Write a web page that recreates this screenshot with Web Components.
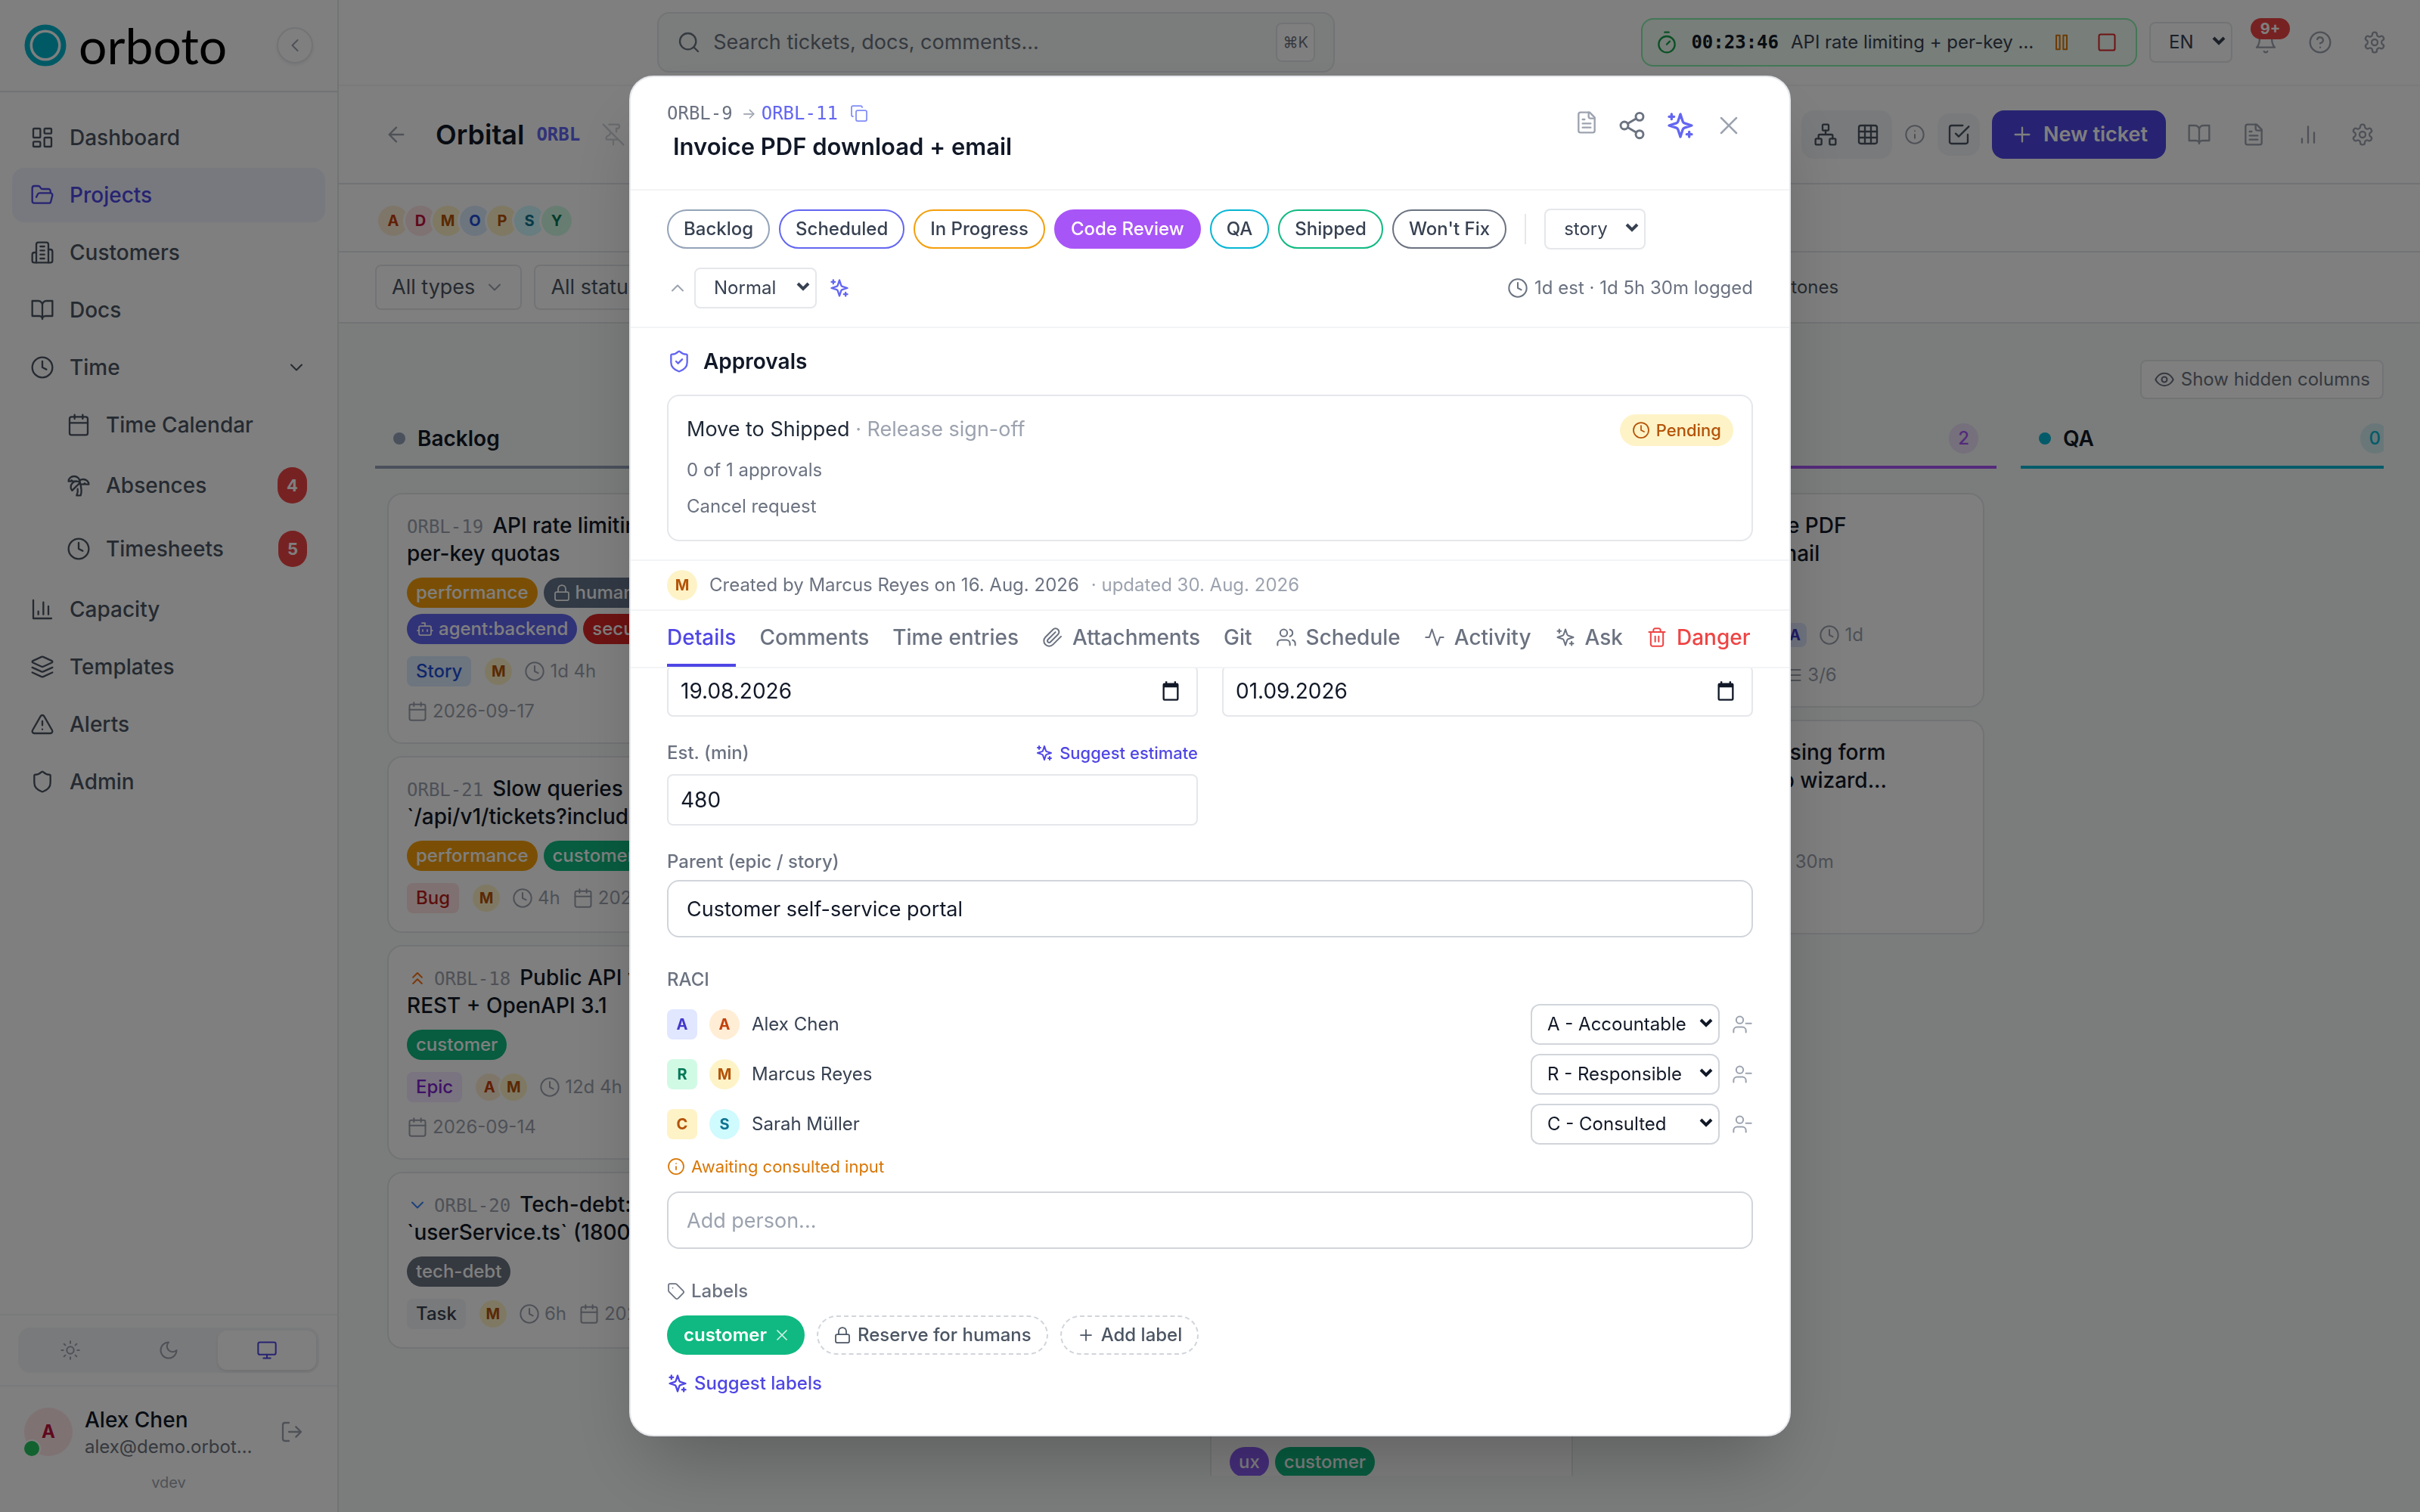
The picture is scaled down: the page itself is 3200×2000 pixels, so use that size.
<!DOCTYPE html>
<html lang="en">
<head>
<meta charset="utf-8">
<title>Orbital - orboto</title>
<style>
    html, body { margin: 0; height: 100%; }
    body {
        font-family: Inter, "Liberation Sans", sans-serif;
        font-size: 28px;
        line-height: 40px;
        color: #111827;
        background: #f6faf8;
        overflow: hidden;
    }
</style>
</head>
<body>
<orboto-app></orboto-app>

<script>
const ICONS = {
    dashboard: '<rect x="3" y="3" width="7" height="9" rx="1"/><rect x="14" y="3" width="7" height="5" rx="1"/><rect x="14" y="12" width="7" height="9" rx="1"/><rect x="3" y="16" width="7" height="5" rx="1"/>',
    folder: '<path d="m6 14 1.5-2.9A2 2 0 0 1 9.24 10H20a2 2 0 0 1 1.94 2.5l-1.54 6a2 2 0 0 1-1.95 1.5H4a2 2 0 0 1-2-2V5a2 2 0 0 1 2-2h3.9a2 2 0 0 1 1.69.9l.81 1.2a2 2 0 0 0 1.67.9H18a2 2 0 0 1 2 2v2"/>',
    building: '<path d="M6 22V4a2 2 0 0 1 2-2h8a2 2 0 0 1 2 2v18Z"/><path d="M6 12H4a2 2 0 0 0-2 2v6a2 2 0 0 0 2 2h2M18 9h2a2 2 0 0 1 2 2v9a2 2 0 0 1-2 2h-2M10 6h4M10 10h4M10 14h4M10 18h4"/>',
    book: '<path d="M2 3h6a4 4 0 0 1 4 4v14a3 3 0 0 0-3-3H2zM22 3h-6a4 4 0 0 0-4 4v14a3 3 0 0 1 3-3h7z"/>',
    clock: '<circle cx="12" cy="12" r="10"/><path d="M12 6v6l4 2"/>',
    'chevron-down': '<path d="m6 9 6 6 6-6"/>',
    'chevron-left': '<path d="m15 18-6-6 6-6"/>',
    'chevron-up': '<path d="m18 15-6-6-6 6"/>',
    'chevrons-up': '<path d="m17 11-5-5-5 5M17 18l-5-5-5 5"/>',
    calendar: '<rect x="3" y="4" width="18" height="18" rx="2"/><path d="M16 2v4M8 2v4M3 10h18"/>',
    palm: '<path d="M13 8c0-2.76-2.46-5-5.5-5S2 5.24 2 8h2l1-1 1 1h4"/><path d="M13 7.14A5.82 5.82 0 0 1 16.5 6c3.04 0 5.5 2.24 5.5 5h-3l-1-1-1 1h-3"/><path d="M5.89 9.71c-2.15 2.15-2.3 5.47-.35 7.43l4.24-4.25.7-.7.71-.71 2.12-2.12c-1.95-1.96-5.27-1.8-7.42.35"/><path d="M11 15.5c.5 2.5-.17 4.5-1 6.5h4c2-5.5-.5-12-1-14"/>',
    capacity: '<path d="M3 3v18h18M18 17V9M13 17V5M8 17v-3"/>',
    layers: '<path d="m12.83 2.18a2 2 0 0 0-1.66 0L2.6 6.08a1 1 0 0 0 0 1.83l8.58 3.91a2 2 0 0 0 1.66 0l8.58-3.9a1 1 0 0 0 0-1.83Z"/><path d="m22 17.65-9.17 4.16a2 2 0 0 1-1.66 0L2 17.65M22 12.65l-9.17 4.16a2 2 0 0 1-1.66 0L2 12.65"/>',
    alert: '<path d="m21.73 18-8-14a2 2 0 0 0-3.48 0l-8 14A2 2 0 0 0 4 21h16a2 2 0 0 0 1.73-3ZM12 9v4M12 17h.01"/>',
    shield: '<path d="M20 13c0 5-3.5 7.5-7.66 8.95a1 1 0 0 1-.67-.01C7.5 20.5 4 18 4 13V6a1 1 0 0 1 1-1c2 0 4.5-1.2 6.24-2.72a1.17 1.17 0 0 1 1.52 0C14.51 3.81 17 5 19 5a1 1 0 0 1 1 1z"/>',
    'shield-check': '<path d="M20 13c0 5-3.5 7.5-7.66 8.95a1 1 0 0 1-.67-.01C7.5 20.5 4 18 4 13V6a1 1 0 0 1 1-1c2 0 4.5-1.2 6.24-2.72a1.17 1.17 0 0 1 1.52 0C14.51 3.81 17 5 19 5a1 1 0 0 1 1 1zM9 12l2 2 4-4"/>',
    sun: '<circle cx="12" cy="12" r="4"/><path d="M12 2v2M12 20v2M4.93 4.93l1.41 1.41M17.66 17.66l1.41 1.41M2 12h2M20 12h2M6.34 17.66l-1.41 1.41M19.07 4.93l-1.41 1.41"/>',
    moon: '<path d="M12 3a6 6 0 0 0 9 9 9 9 0 1 1-9-9Z"/>',
    monitor: '<rect x="2" y="3" width="20" height="14" rx="2"/><path d="M8 21h8M12 17v4"/>',
    logout: '<path d="M9 21H5a2 2 0 0 1-2-2V5a2 2 0 0 1 2-2h4M16 17l5-5-5-5M21 12H9"/>',
    search: '<circle cx="11" cy="11" r="8"/><path d="m21 21-4.3-4.3"/>',
    timer: '<path d="M10 2h4M12 14l3-3"/><circle cx="12" cy="14" r="8"/>',
    pause: '<rect x="6" y="4" width="4" height="16"/><rect x="14" y="4" width="4" height="16"/>',
    stop: '<rect x="3" y="3" width="18" height="18" rx="2"/>',
    bell: '<path d="M6 8a6 6 0 0 1 12 0c0 7 3 9 3 9H3s3-2 3-9M10.3 21a1.94 1.94 0 0 0 3.4 0"/>',
    help: '<circle cx="12" cy="12" r="10"/><path d="M9.09 9a3 3 0 0 1 5.83 1c0 2-3 3-3 3M12 17h.01"/>',
    gear: '<path d="M12.22 2h-.44a2 2 0 0 0-2 2v.18a2 2 0 0 1-1 1.73l-.43.25a2 2 0 0 1-2 0l-.15-.08a2 2 0 0 0-2.73.73l-.22.38a2 2 0 0 0 .73 2.73l.15.1a2 2 0 0 1 1 1.72v.51a2 2 0 0 1-1 1.74l-.15.09a2 2 0 0 0-.73 2.73l.22.38a2 2 0 0 0 2.73.73l.15-.08a2 2 0 0 1 2 0l.43.25a2 2 0 0 1 1 1.73V20a2 2 0 0 0 2 2h.44a2 2 0 0 0 2-2v-.18a2 2 0 0 1 1-1.73l.43-.25a2 2 0 0 1 2 0l.15.08a2 2 0 0 0 2.73-.73l.22-.39a2 2 0 0 0-.73-2.73l-.15-.08a2 2 0 0 1-1-1.74v-.5a2 2 0 0 1 1-1.74l.15-.09a2 2 0 0 0 .73-2.73l-.22-.38a2 2 0 0 0-2.73-.73l-.15.08a2 2 0 0 1-2 0l-.43-.25a2 2 0 0 1-1-1.73V4a2 2 0 0 0-2-2z"/><circle cx="12" cy="12" r="3"/>',
    'arrow-left': '<path d="m12 19-7-7 7-7M19 12H5"/>',
    'pin-off': '<path d="M2 2l20 20M12 17v5M9 9v1.76a2 2 0 0 1-1.11 1.79l-1.78.9A2 2 0 0 0 5 15.24V16a1 1 0 0 0 1 1h11M15 9.34V6h1a2 2 0 0 0 0-4H7.89"/>',
    network: '<rect x="16" y="16" width="6" height="6" rx="1"/><rect x="2" y="16" width="6" height="6" rx="1"/><rect x="9" y="2" width="6" height="6" rx="1"/><path d="M5 16v-3a1 1 0 0 1 1-1h12a1 1 0 0 1 1 1v3M12 12V8"/>',
    grid: '<rect x="3" y="3" width="18" height="18" rx="2"/><path d="M3 9h18M3 15h18M9 3v18M15 3v18"/>',
    info: '<circle cx="12" cy="12" r="10"/><path d="M12 16v-4M12 8h.01"/>',
    'check-square': '<path d="m9 11 3 3L22 4"/><path d="M21 12v7a2 2 0 0 1-2 2H5a2 2 0 0 1-2-2V5a2 2 0 0 1 2-2h11"/>',
    plus: '<path d="M5 12h14M12 5v14"/>',
    file: '<path d="M15 2H6a2 2 0 0 0-2 2v16a2 2 0 0 0 2 2h12a2 2 0 0 0 2-2V7Z"/><path d="M14 2v4a2 2 0 0 0 2 2h4M10 9H8M16 13H8M16 17H8"/>',
    bars: '<path d="M18 20V10M12 20V4M6 20v-4"/>',
    eye: '<path d="M2 12s3-7 10-7 10 7 10 7-3 7-10 7-10-7-10-7Z"/><circle cx="12" cy="12" r="3"/>',
    lock: '<rect x="3" y="11" width="18" height="11" rx="2"/><path d="M7 11V7a5 5 0 0 1 10 0v4"/>',
    bot: '<path d="M12 8V4H8"/><rect x="4" y="8" width="16" height="12" rx="2"/><path d="M2 14h2M20 14h2M15 13v2M9 13v2"/>',
    list: '<path d="M3 6h18M3 12h18M3 18h18"/>',
    copy: '<rect x="8" y="8" width="14" height="14" rx="2"/><path d="M4 16c-1.1 0-2-.9-2-2V4c0-1.1.9-2 2-2h10c1.1 0 2 .9 2 2"/>',
    share: '<circle cx="18" cy="5" r="3"/><circle cx="6" cy="12" r="3"/><circle cx="18" cy="19" r="3"/><path d="m8.59 13.51 6.83 3.98M15.41 6.51l-6.82 3.98"/>',
    sparkles: '<path d="m12 3-1.912 5.813a2 2 0 0 1-1.275 1.275L3 12l5.813 1.912a2 2 0 0 1 1.275 1.275L12 21l1.912-5.813a2 2 0 0 1 1.275-1.275L21 12l-5.813-1.912a2 2 0 0 1-1.275-1.275L12 3ZM5 3v4M19 17v4M3 5h4M17 19h4"/>',
    x: '<path d="M18 6 6 18M6 6l12 12"/>',
    clip: '<path d="m21.44 11.05-9.19 9.19a6 6 0 0 1-8.49-8.49l8.57-8.57A4 4 0 1 1 18 8.84l-8.59 8.57a2 2 0 0 1-2.83-2.83l8.49-8.48"/>',
    users: '<path d="M16 21v-2a4 4 0 0 0-4-4H6a4 4 0 0 0-4 4v2"/><circle cx="9" cy="7" r="4"/><path d="M22 21v-2a4 4 0 0 0-3-3.87M16 3.13a4 4 0 0 1 0 7.75"/>',
    activity: '<path d="M22 12h-4l-3 9L9 3l-3 9H2"/>',
    trash: '<path d="M3 6h18M19 6v14c0 1-1 2-2 2H7c-1 0-2-1-2-2V6M8 6V4c0-1 1-2 2-2h4c1 0 2 1 2 2v2M10 11v6M14 11v6"/>',
    'user-minus': '<path d="M16 21v-2a4 4 0 0 0-4-4H6a4 4 0 0 0-4 4v2"/><circle cx="9" cy="7" r="4"/><path d="M22 11h-6"/>',
    tag: '<path d="M12.59 2.59A2 2 0 0 0 11.17 2H4a2 2 0 0 0-2 2v7.17a2 2 0 0 0 .59 1.42l8.7 8.7a2.43 2.43 0 0 0 3.42 0l6.58-6.58a2.43 2.43 0 0 0 0-3.42zM7.5 7.5h.01"/>',
    'date-picker': '<path fill="currentColor" stroke="none" fill-rule="evenodd" d="M6 1h2v2h8V1h2v2h1a2 2 0 0 1 2 2v16a2 2 0 0 1-2 2H5a2 2 0 0 1-2-2V5a2 2 0 0 1 2-2h1zM5 8v13h14V8z"/>',
};

const AVATAR_COLORS = {
    orange: ["#ffedd5", "#c2410c"],
    rose: ["#ffe4e6", "#be123c"],
    amber: ["#fef3c7", "#b45309"],
    blue: ["#dbeafe", "#1d4ed8"],
    cyan: ["#cffafe", "#0e7490"],
    green: ["#d1fae5", "#047857"],
    indigo: ["#e0e7ff", "#4338ca"],
};

// Reset shared by every shadow root
const BASE = `
    *, *::before, *::after { box-sizing: border-box; }
    button, input, select { font: inherit; color: inherit; margin: 0; }
    button { display: inline-flex; align-items: center; justify-content: center; border: 0; padding: 0; background: none; cursor: pointer; white-space: nowrap; }
    a { color: inherit; text-decoration: none; }
    h1, h2, h3, p { margin: 0; font: inherit; }
    .mono { font-family: "DejaVu Sans Mono", "Liberation Mono", monospace; font-size: 24px; }
`;

class BaseElement extends HTMLElement {
    constructor() {
        super();
        this.attachShadow({ mode: "open" });
    }

    connectedCallback() {
        this.shadowRoot.innerHTML = `<style>${BASE}${this.styles()}</style>${this.markup()}`;
    }

    attr(name, fallback = "") {
        return this.getAttribute(name) ?? fallback;
    }

    styles() { return ""; }
    markup() { return "<slot></slot>"; }
}

class UiIcon extends BaseElement {
    styles() {
        const size = this.attr("size", "32");
        return `
            :host { display: inline-flex; flex: none; width: ${size}px; height: ${size}px; }
            svg { width: 100%; height: 100%; }
        `;
    }
    markup() {
        return `<svg viewBox="0 0 24 24" fill="none" stroke="currentColor" stroke-width="${this.attr("stroke", "1.75")}" stroke-linecap="round" stroke-linejoin="round" aria-hidden="true">${ICONS[this.attr("name")]}</svg>`;
    }
}
customElements.define("ui-icon", UiIcon);

class UiAvatar extends BaseElement {
    styles() {
        const [bg, fg] = AVATAR_COLORS[this.attr("tone", "amber")];
        const size = this.attr("size", "40");
        return `
            :host {
                display: inline-flex; flex: none; align-items: center; justify-content: center;
                width: ${size}px; height: ${size}px; border-radius: ${this.hasAttribute("square") ? "8px" : "50%"};
                background: ${bg}; color: ${fg};
                font-size: ${size > 50 ? 24 : 20}px; font-weight: 700; line-height: 1;
            }
        `;
    }
}
customElements.define("ui-avatar", UiAvatar);

class UiSelect extends BaseElement {
    styles() {
        return `
            :host { display: inline-grid; flex: none; font-size: 24px; line-height: 32px; color: #374151; --edge: #e5e7eb; --pad: 24px; --radius: 8px; }
            select {
                grid-area: 1 / 1; width: 100%; height: 54px; appearance: none; background: #fff;
                border: 2px solid var(--edge); border-radius: var(--radius); padding: 0 36px 0 var(--pad);
            }
            svg { grid-area: 1 / 1; place-self: center end; width: 18px; height: 12px; margin: 0 9px 4px 0; pointer-events: none; }
        `;
    }
    markup() {
        const options = this.attr("options").split("|").map(o => `<option>${o}</option>`).join("");
        return `
            <select aria-label="${this.attr("label")}">${options}</select>
            <svg viewBox="0 0 18 12" fill="none" stroke="currentColor" stroke-width="4"><path d="m2 2 7 7 7-7"/></svg>
        `;
    }
}
customElements.define("ui-select", UiSelect);

class NavItem extends BaseElement {
    styles() {
        return `
            :host { display: block; }
            a { display: flex; align-items: center; gap: 20px; padding: 16px 24px; border-radius: 16px; color: #4b5563; font-weight: 500; }
            :host([sub]) a { padding-left: 72px; }
            :host([active]) a { background: #eef2ff; color: #4f46e5; }
            .label { flex: 1; }
            .badge { min-width: 38px; height: 48px; line-height: 48px; padding: 0 12px; border-radius: 20px; background: #ef4444; color: #fff; font-size: 22px; font-weight: 700; text-align: center; }
        `;
    }
    markup() {
        const badge = this.hasAttribute("badge") ? `<span class="badge">${this.attr("badge")}</span>` : "";
        const chevron = this.hasAttribute("expandable") ? `<ui-icon name="chevron-down" size="28"></ui-icon>` : "";
        return `<a href="#"><ui-icon name="${this.attr("icon")}"></ui-icon><span class="label"><slot></slot></span>${badge}${chevron}</a>`;
    }
}
customElements.define("nav-item", NavItem);

class AppSidebar extends BaseElement {
    styles() {
        return `
            :host { display: flex; flex-direction: column; flex: none; width: 448px; background: #fff; border-right: 2px solid #e5e7eb; }
            header { display: flex; align-items: center; height: 122px; padding: 0 32px; border-bottom: 2px solid #e5e7eb; }
            .logo { display: flex; align-items: center; gap: 16px; flex: 1; color: #000; font-family: Lato, Inter, sans-serif; font-weight: 400; font-size: 66px; line-height: 56px; }
            .logo svg { width: 56px; height: 56px; }
            .collapse { width: 48px; height: 48px; border: 2px solid #e5e7eb; border-radius: 50%; color: #9ca3af; box-shadow: 0 2px 4px rgba(0, 0, 0, .08); }
            nav { display: flex; flex-direction: column; gap: 4px; flex: 1; padding: 24px 16px; }
            .theme { padding: 16px 24px; border-top: 2px solid #f3f4f6; }
            .segments { display: grid; grid-template-columns: repeat(3, 1fr); padding: 4px; border-radius: 16px; background: #f3f4f6; color: #9ca3af; }
            .segments button { height: 52px; border-radius: 12px; }
            .segments .on { background: #fff; color: #4f46e5; box-shadow: 0 2px 4px rgba(0, 0, 0, .08); }
            footer { padding: 24px 32px; border-top: 2px solid #f3f4f6; }
            .user { display: flex; align-items: center; gap: 16px; }
            .face { position: relative; display: flex; }
            .dot { position: absolute; left: -2px; bottom: -2px; width: 24px; height: 24px; border: 2px solid #fff; border-radius: 50%; background: #22c55e; }
            .who { flex: 1; min-width: 0; white-space: nowrap; }
            .name { font-weight: 500; }
            .mail { font-size: 24px; line-height: 32px; color: #6b7280; }
            .exit { width: 56px; height: 56px; color: #9ca3af; }
            .version { margin-top: 16px; font-size: 20px; line-height: 30px; text-align: center; color: #9ca3af; }
        `;
    }
    markup() {
        return `
            <header>
                <a class="logo" href="#">
                    <svg viewBox="0 0 56 56"><circle cx="28" cy="28" r="24" fill="none" stroke="#00b4cc" stroke-width="7"/><circle cx="28" cy="28" r="17" fill="#00b4cc"/></svg>
                    orboto
                </a>
                <button class="collapse" aria-label="Collapse"><ui-icon name="chevron-left" size="28"></ui-icon></button>
            </header>
            <nav>
                <nav-item icon="dashboard">Dashboard</nav-item>
                <nav-item icon="folder" active>Projects</nav-item>
                <nav-item icon="building">Customers</nav-item>
                <nav-item icon="book">Docs</nav-item>
                <nav-item icon="clock" expandable>Time</nav-item>
                <nav-item icon="calendar" sub>Time Calendar</nav-item>
                <nav-item icon="palm" sub badge="4">Absences</nav-item>
                <nav-item icon="clock" sub badge="5">Timesheets</nav-item>
                <nav-item icon="capacity">Capacity</nav-item>
                <nav-item icon="layers">Templates</nav-item>
                <nav-item icon="alert">Alerts</nav-item>
                <nav-item icon="shield">Admin</nav-item>
            </nav>
            <div class="theme">
                <div class="segments">
                    <button aria-label="Light"><ui-icon name="sun" size="28"></ui-icon></button>
                    <button aria-label="Dark"><ui-icon name="moon" size="28"></ui-icon></button>
                    <button class="on" aria-label="System"><ui-icon name="monitor" size="28"></ui-icon></button>
                </div>
            </div>
            <footer>
                <div class="user">
                    <div class="face"><ui-avatar tone="rose" size="64">A</ui-avatar><span class="dot"></span></div>
                    <div class="who">
                        <div class="name">Alex Chen</div>
                        <div class="mail">alex@demo.orbot…</div>
                    </div>
                    <button class="exit" aria-label="Log out"><ui-icon name="logout"></ui-icon></button>
                </div>
                <div class="version">vdev</div>
            </footer>
        `;
    }
}
customElements.define("app-sidebar", AppSidebar);

class AppTopbar extends BaseElement {
    styles() {
        return `
            :host { display: flex; align-items: center; gap: 16px; flex: none; height: 114px; padding: 0 32px; background: #fff; border-bottom: 2px solid #f3f4f6; }
            .middle { flex: 1; display: flex; justify-content: center; }
            .search { display: flex; align-items: center; gap: 16px; width: 896px; height: 80px; padding: 0 24px; border: 2px solid #e5e7eb; border-radius: 16px; background: #f6faf8; color: #6b7280; font-size: 27px; }
            .search span { flex: 1; text-align: left; }
            kbd { height: 52px; width: 52px; line-height: 48px; border: 2px solid #e5e7eb; border-radius: 8px; background: #fff; font-family: Inter, sans-serif; font-size: 20px; text-align: center; }
            .timer { display: flex; align-items: center; height: 64px; padding: 0 16px; gap: 16px; border: 2px solid #86efac; border-radius: 16px; background: #f0fdf4; color: #16a34a; }
            .timer .mono { font-weight: 700; color: #111827; }
            .task { width: 320px; white-space: nowrap; font-size: 24px; color: #374151; }
            .timer button { width: 44px; height: 44px; }
            .pause { color: #d97706; }
            .stop { color: #dc2626; }
            .tool { position: relative; width: 56px; height: 56px; color: #9ca3af; }
            .count { position: absolute; top: -4px; right: -4px; width: 52px; height: 28px; line-height: 28px; border-radius: 14px; background: #ef4444; color: #fff; font-size: 20px; font-weight: 700; }
            ui-select { width: 110px; }
        `;
    }
    markup() {
        return `
            <div class="middle">
                <button class="search"><ui-icon name="search"></ui-icon><span>Search tickets, docs, comments...</span><kbd>⌘K</kbd></button>
            </div>
            <div class="timer">
                <ui-icon name="timer"></ui-icon>
                <span class="mono">00:23:46</span>
                <span class="task">API rate limiting + per-key …</span>
                <button class="pause" aria-label="Pause"><ui-icon name="pause" size="28"></ui-icon></button>
                <button class="stop" aria-label="Stop"><ui-icon name="stop" size="28"></ui-icon></button>
            </div>
            <ui-select label="Language" options="EN|DE"></ui-select>
            <button class="tool" aria-label="Notifications"><ui-icon name="bell"></ui-icon><span class="count">9+</span></button>
            <button class="tool" aria-label="Help"><ui-icon name="help"></ui-icon></button>
            <button class="tool" aria-label="Settings"><ui-icon name="gear"></ui-icon></button>
        `;
    }
}
customElements.define("app-topbar", AppTopbar);

class ProjectHeader extends BaseElement {
    styles() {
        return `
            :host { display: block; flex: none; background: #fff; }
            .bar { display: flex; align-items: center; gap: 16px; height: 130px; padding: 0 48px; border-bottom: 2px solid #e5e7eb; }
            .tool { width: 56px; height: 56px; color: #9ca3af; }
            h1 { margin-left: 8px; font-size: 36px; font-weight: 600; }
            .key { font-weight: 700; color: #6366f1; }
            .pin { color: #d1d5db; }
            .spacer { flex: 1; }
            .views { display: flex; padding: 4px; border-radius: 16px; background: #f3f4f6; color: #4b5563; }
            .views button { width: 56px; height: 56px; }
            .info { color: #9ca3af; }
            .check { width: 56px; height: 56px; border-radius: 16px; background: #f3f4f6; color: #4b5563; }
            .new { height: 64px; padding: 0 24px; gap: 12px; border-radius: 16px; background: #4f46e5; color: #fff; font-size: 27px; font-weight: 600; }
            .members { display: flex; height: 90px; padding: 28px 52px 0; border-bottom: 2px solid #e5e7eb; }
            .members ui-avatar { box-shadow: 0 0 0 3px #fff; }
            .members ui-avatar + ui-avatar { margin-left: -4px; }
            .filters { display: flex; align-items: center; gap: 16px; height: 94px; padding: 0 48px; border-bottom: 2px solid #e5e7eb; color: #4b5563; }
            .filters button { height: 60px; gap: 12px; padding: 0 20px; border: 2px solid #e5e7eb; border-radius: 8px; font-size: 27px; }
            .filters button ui-icon { color: #9ca3af; }
            .filters input[type=search] { width: 1230px; height: 60px; border: 2px solid #e5e7eb; border-radius: 8px; }
            .filters label { display: flex; align-items: center; gap: 12px; font-size: 24px; }
            .filters label input { width: 28px; height: 28px; }
        `;
    }
    markup() {
        return `
            <div class="bar">
                <button class="tool" aria-label="Back"><ui-icon name="arrow-left"></ui-icon></button>
                <h1>Orbital</h1>
                <span class="key mono">ORBL</span>
                <button class="tool pin" aria-label="Pin"><ui-icon name="pin-off"></ui-icon></button>
                <span class="spacer"></span>
                <div class="views">
                    <button aria-label="Tree"><ui-icon name="network"></ui-icon></button>
                    <button aria-label="Table"><ui-icon name="grid"></ui-icon></button>
                </div>
                <button class="info" aria-label="Info"><ui-icon name="info" size="28"></ui-icon></button>
                <button class="check" aria-label="Select"><ui-icon name="check-square"></ui-icon></button>
                <button class="new"><ui-icon name="plus"></ui-icon>New ticket</button>
                <button class="tool" aria-label="Docs"><ui-icon name="book"></ui-icon></button>
                <button class="tool" aria-label="Report"><ui-icon name="file"></ui-icon></button>
                <button class="tool" aria-label="Stats"><ui-icon name="bars"></ui-icon></button>
                <button class="tool" aria-label="Project settings"><ui-icon name="gear"></ui-icon></button>
            </div>
            <div class="members">
                <ui-avatar tone="orange">A</ui-avatar>
                <ui-avatar tone="rose">D</ui-avatar>
                <ui-avatar tone="amber">M</ui-avatar>
                <ui-avatar tone="blue">O</ui-avatar>
                <ui-avatar tone="amber">P</ui-avatar>
                <ui-avatar tone="cyan">S</ui-avatar>
                <ui-avatar tone="green">Y</ui-avatar>
            </div>
            <div class="filters">
                <button>All types<ui-icon name="chevron-down" size="28"></ui-icon></button>
                <button>All statuses<ui-icon name="chevron-down" size="28"></ui-icon></button>
                <input type="search" aria-label="Filter tickets">
                <label><input type="checkbox">Show milestones</label>
            </div>
        `;
    }
}
customElements.define("project-header", ProjectHeader);

class TicketCard extends BaseElement {
    styles() {
        return `
            :host { display: block; flex: none; padding: 24px; background: #fff; border: 2px solid #e5e7eb; border-radius: 20px; }
            h3 { line-height: 35px; height: 70px; font-weight: 500; white-space: pre-line; overflow: hidden; }
            .prio { vertical-align: -5px; margin-right: 8px; }
            .up { color: #f97316; }
            .down { color: #3b82f6; }
            .mono { color: #9ca3af; margin-right: 12px; }
            .labels, .meta { display: flex; margin-top: 16px; }
            .labels { flex-wrap: wrap; gap: 8px; min-height: 40px; font-size: 24px; font-weight: 500; color: #fff; }
            .labels span { display: flex; align-items: center; gap: 6px; height: 40px; padding: 0 12px; border-radius: 20px; }
            .meta { gap: 16px; font-size: 24px; line-height: 34px; color: #9ca3af; }
            .meta > span { display: flex; align-items: center; gap: 6px; }
            .meta > ui-avatar { align-self: center; }
            .meta > .kind { height: 40px; padding: 0 12px; border-radius: 8px; font-weight: 500; }
            .Story { background: #dbeafe; color: #1d4ed8; }
            .Bug { background: #fee2e2; color: #b91c1c; }
            .Epic { background: #f3e8ff; color: #7e22ce; }
            .Task { background: #f3f4f6; color: #374151; }
            .meta > .people { padding-left: 2px; gap: 0; }
            .people ui-avatar + ui-avatar { margin-left: -4px; box-shadow: 0 0 0 2px #fff; }
        `;
    }
    markup() {
        const t = this.ticket;
        const prio = { up: "chevrons-up", down: "chevron-down" }[t.prio];
        const labels = (t.labels || []).map(([text, color, icon]) =>
            `<span style="background:${color}">${icon ? `<ui-icon name="${icon}" size="24"></ui-icon>` : ""}${text}</span>`).join("");
        const people = t.people.map(([letter, tone]) => `<ui-avatar tone="${tone}" size="36">${letter}</ui-avatar>`).join("");
        const due = t.due ? `<span><ui-icon name="calendar" size="28"></ui-icon>${t.due}</span>` : "";
        const checks = t.checks ? `<span><ui-icon name="list" size="28"></ui-icon>${t.checks}</span>` : "";
        return `
            <h3>${prio ? `<ui-icon class="prio ${t.prio}" name="${prio}" size="28"></ui-icon>` : ""}<span class="mono">${t.key}</span>${t.title}</h3>
            <div class="labels">${labels}</div>
            <div class="meta">
                <span class="kind ${t.kind}">${t.kind}</span>
                <span class="people">${people}</span>
                ${t.role ? `<ui-avatar tone="indigo" size="32" square>${t.role}</ui-avatar>` : ""}
                <span><ui-icon name="clock" size="28"></ui-icon>${t.time}</span>
                ${t.wrap ? "" : due}
            </div>
            ${t.wrap ? `<div class="meta">${due}${checks}</div>` : ""}
        `;
    }
}
customElements.define("ticket-card", TicketCard);

const M = ["M", "amber"];
const A = ["A", "orange"];
const PERFORMANCE = ["performance", "#f59e0b"];
const CUSTOMER = ["customer", "#10b981"];

const COLUMNS = [
    { name: "Backlog", color: "#94a3b8", count: 4, tickets: [
        { key: "ORBL-19", title: "API rate limiting +\nper-key quotas", kind: "Story", people: [M], time: "1d 4h", due: "2026-09-17", wrap: true,
          labels: [PERFORMANCE, ["human-only", "#64748b", "lock"], ["agent:backend", "#6366f1", "bot"], ["security", "#dc2626"]] },
        { key: "ORBL-21", title: "Slow queries on\n`/api/v1/tickets?include=all`", kind: "Bug", people: [M], time: "4h", due: "2026-09-10",
          labels: [PERFORMANCE, CUSTOMER] },
        { key: "ORBL-18", prio: "up", title: "Public API v2:\nREST + OpenAPI 3.1", kind: "Epic", people: [A, M], time: "12d 4h", due: "2026-09-14", wrap: true,
          labels: [CUSTOMER] },
        { key: "ORBL-20", prio: "down", title: "Tech-debt: split\n`userService.ts` (1800 LOC)", kind: "Task", people: [M], time: "6h", due: "2026-09-21",
          labels: [["tech-debt", "#6b7280"]] },
    ] },
    { name: "Scheduled", color: "#6366f1", count: 0, tickets: [] },
    { name: "In Progress", color: "#f59e0b", count: 5, tickets: [
        { key: "ORBL-10", title: "", kind: "Story", people: [M], time: "2d", due: "2026-09-02", wrap: true },
        { key: "ORBL-12", title: "", kind: "Story", people: [M], time: "1d", due: "2026-09-03", wrap: true },
        { key: "ORBL-13", title: "", kind: "Story", people: [M], time: "3d", due: "2026-09-04", wrap: true },
        { key: "ORBL-14", title: "", kind: "Task", people: [M], time: "4h" },
        { key: "ORBL-15", title: "", kind: "Story", people: [M], time: "1d", labels: [["ux", "#8b5cf6"], CUSTOMER] },
    ] },
    { name: "Code Review", color: "#a855f7", count: 2, tickets: [
        { key: "ORBL-11", title: "Invoice PDF\ndownload + email", kind: "Story", people: [M, A], role: "A", time: "1d", due: "2026-09-01", checks: "3/6", wrap: true },
        { key: "ORBL-16", prio: "up", title: "Missing form\nlabels on setup wizard...", kind: "Bug", people: [M], time: "1h 30m", due: "2026-09-01", wrap: true },
    ] },
    { name: "QA", color: "#06b6d4", count: 0, tickets: [] },
];

class KanbanColumn extends BaseElement {
    styles() {
        const c = this.column.color;
        return `
            :host { display: flex; flex-direction: column; gap: 32px; flex: none; width: 512px; }
            header { display: flex; align-items: center; gap: 16px; padding: 0 24px 16px; border-bottom: 4px solid ${c}; }
            .dot { width: 16px; height: 16px; border-radius: 50%; background: ${c}; }
            h2 { flex: 1; font-weight: 600; }
            .count { min-width: 38px; height: 40px; border-radius: 20px; padding: 0 12px; font-size: 24px; font-weight: 500; text-align: center; color: ${c}; background: ${c}26; }
            .stack { display: flex; flex-direction: column; gap: 16px; padding: 0 16px; }
        `;
    }
    markup() {
        return `
            <header><span class="dot"></span><h2>${this.column.name}</h2><span class="count">${this.column.count}</span></header>
            <div class="stack"></div>
        `;
    }
    connectedCallback() {
        super.connectedCallback();
        const stack = this.shadowRoot.querySelector(".stack");
        this.column.tickets.forEach(ticket => {
            const card = document.createElement("ticket-card");
            card.ticket = ticket;
            stack.appendChild(card);
        });
    }
}
customElements.define("kanban-column", KanbanColumn);

class KanbanBoard extends BaseElement {
    styles() {
        return `
            :host { display: flex; flex-direction: column; flex: 1; min-height: 0; padding: 48px; gap: 32px; }
            .toggle { align-self: flex-end; height: 52px; flex: none; padding: 0 16px; gap: 8px; border: 2px solid #e5e7eb; border-radius: 8px; background: #fff; color: #6b7280; font-size: 24px; }
            .columns { display: flex; gap: 32px; flex: 1; min-height: 0; overflow: hidden; }
        `;
    }
    markup() {
        return `
            <button class="toggle"><ui-icon name="eye" size="28"></ui-icon>Show hidden columns</button>
            <div class="columns"></div>
        `;
    }
    connectedCallback() {
        super.connectedCallback();
        const columns = this.shadowRoot.querySelector(".columns");
        COLUMNS.forEach(column => {
            const element = document.createElement("kanban-column");
            element.column = column;
            columns.appendChild(element);
        });
    }
}
customElements.define("kanban-board", KanbanBoard);

class StatusPill extends BaseElement {
    styles() {
        const c = this.attr("color");
        return `
            :host { display: inline-flex; }
            button { height: 52px; padding: 0 20px; border: 2px solid ${c}; border-radius: 26px; font-size: 24px; font-weight: 500; color: #374151; }
            :host([active]) button { background: ${c}; color: #fff; }
        `;
    }
    markup() {
        return `<button><slot></slot></button>`;
    }
}
customElements.define("status-pill", StatusPill);

class TabItem extends BaseElement {
    styles() {
        return `
            :host { display: inline-flex; color: #6b7280; }
            button { gap: 12px; padding: 16px 0; border-bottom: 4px solid transparent; font-weight: 500; }
            :host([active]) button { color: #4f46e5; border-color: #4f46e5; }
            :host([danger]) button { color: #ef4444; }
        `;
    }
    markup() {
        const icon = this.hasAttribute("icon") ? `<ui-icon name="${this.attr("icon")}" size="28"></ui-icon>` : "";
        return `<button role="tab">${icon}<slot></slot></button>`;
    }
}
customElements.define("tab-item", TabItem);

class RaciRow extends BaseElement {
    styles() {
        return `
            :host { display: flex; align-items: center; gap: 16px; font-size: 24px; color: #374151; }
            .name { flex: 1; }
            ui-select { width: 250px; color: #111827; --edge: #d1d5db; --pad: 20px; --radius: 12px; }
            button { color: #9ca3af; }
        `;
    }
    markup() {
        const name = this.attr("name");
        return `
            <ui-avatar square tone="${this.attr("role-tone")}">${this.attr("letter")}</ui-avatar>
            <ui-avatar tone="${this.attr("tone")}">${name[0]}</ui-avatar>
            <span class="name">${name}</span>
            <ui-select label="Role of ${name}" options="${this.attr("duty")}"></ui-select>
            <button aria-label="Remove ${name}"><ui-icon name="user-minus" size="28"></ui-icon></button>
        `;
    }
}
customElements.define("raci-row", RaciRow);

class TicketDetails extends BaseElement {
    styles() {
        return `
            :host { display: block; flex: 1; min-height: 0; overflow: hidden; padding: 0 48px; font-size: 24px; line-height: 32px; }
            /* scrolled a little, so the date fields slide under the tabs */
            .dates { display: grid; grid-template-columns: 1fr 1fr; gap: 32px; margin-top: -4px; }
            .box { display: flex; align-items: center; width: 100%; height: 68px; padding: 0 20px 0 16px; border: 2px solid #e5e7eb; border-radius: 8px; background: #fff; color: #111827; font-size: 28px; }
            .box input { flex: 1; min-width: 0; border: 0; padding: 0; outline: 0; background: none; }
            .wide { height: 76px; padding: 0 24px; border-color: #d1d5db; border-radius: 16px; font-size: 27px; }
            .wide::placeholder { color: #9ca3af; }
            .est { width: calc(50% - 16px); margin-top: 32px; }
            .row { display: flex; align-items: center; justify-content: space-between; height: 32px; margin-bottom: 12px; }
            .caption { display: flex; align-items: center; gap: 8px; font-weight: 500; color: #6b7280; }
            .ai { gap: 8px; font-weight: 500; color: #4f46e5; }
            .small { font-size: 22px; }
            .field { display: grid; gap: 8px; margin-top: 32px; }
            .raci { display: grid; gap: 12px; margin: 16px 0 12px; }
            .section { margin-top: 40px; }
            .wait { display: flex; align-items: center; gap: 8px; margin-bottom: 16px; font-size: 22px; line-height: 34px; color: #d97706; }
            .tags { display: flex; gap: 16px; margin: 16px 0 20px; font-weight: 500; color: #4b5563; }
            .tags button { height: 52px; gap: 8px; padding: 0 20px; border: 2px dashed #d1d5db; border-radius: 26px; }
            .tags .tag { padding: 0 18px 0 22px; border: 0; background: #10b981; color: #fff; font-weight: 600; }
            .tag ui-icon { opacity: .8; }
            .suggest { line-height: 36px; }
        `;
    }
    markup() {
        return `
            <div class="dates">
                <div class="box"><input type="text" aria-label="Start date" value="19.08.2026"><button aria-label="Pick start date"><ui-icon name="date-picker" size="28"></ui-icon></button></div>
                <div class="box"><input type="text" aria-label="Due date" value="01.09.2026"><button aria-label="Pick due date"><ui-icon name="date-picker" size="28"></ui-icon></button></div>
            </div>
            <div class="est">
                <div class="row">
                    <label class="caption" for="est">Est. (min)</label>
                    <button class="ai small"><ui-icon name="sparkles" size="24" stroke="2"></ui-icon>Suggest estimate</button>
                </div>
                <input class="box" id="est" type="text" inputmode="numeric" value="480">
            </div>
            <div class="field">
                <label class="caption" for="parent">Parent (epic / story)</label>
                <input class="box wide" id="parent" type="text" value="Customer self-service portal">
            </div>
            <div class="section caption">RACI</div>
            <div class="raci">
                <raci-row letter="A" role-tone="indigo" tone="orange" name="Alex Chen" duty="A - Accountable"></raci-row>
                <raci-row letter="R" role-tone="green" tone="amber" name="Marcus Reyes" duty="R - Responsible"></raci-row>
                <raci-row letter="C" role-tone="amber" tone="cyan" name="Sarah Müller" duty="C - Consulted"></raci-row>
            </div>
            <div class="wait"><ui-icon name="info" size="24"></ui-icon>Awaiting consulted input</div>
            <input class="box wide" type="text" aria-label="Add person" placeholder="Add person...">
            <div class="section caption"><ui-icon name="tag" size="24"></ui-icon>Labels</div>
            <div class="tags">
                <button class="tag">customer<ui-icon name="x" size="24"></ui-icon></button>
                <button><ui-icon name="lock" size="24"></ui-icon>Reserve for humans</button>
                <button><ui-icon name="plus" size="24"></ui-icon>Add label</button>
            </div>
            <button class="ai suggest"><ui-icon name="sparkles" size="28" stroke="2"></ui-icon>Suggest labels</button>
        `;
    }
}
customElements.define("ticket-details", TicketDetails);

class TicketModal extends BaseElement {
    styles() {
        return `
            :host { position: fixed; inset: 0; display: grid; place-items: center; background: rgba(0, 0, 0, .5); font-size: 24px; line-height: 32px; }
            .dialog { display: flex; flex-direction: column; width: 100%; max-width: 1536px; height: 90vh; overflow: hidden; background: #fff; border: 2px solid #e5e7eb; border-radius: 32px; box-shadow: 0 50px 100px -24px rgba(0, 0, 0, .25); }
            .dialog > * { flex: none; }
            .dialog > ticket-details { flex: 1; }
            header { display: flex; align-items: flex-start; padding: 32px 48px; border-bottom: 2px solid #f3f4f6; }
            .heading { flex: 1; display: grid; gap: 4px; }
            .crumbs { display: flex; align-items: center; gap: 12px; color: #6b7280; }
            .crumbs a { color: #6366f1; }
            .crumbs .arrow { width: 14px; font-size: 20px; text-align: center; color: #9ca3af; }
            .crumbs button { margin-left: 4px; color: #818cf8; }
            .heading h1 { padding-left: 8px; font-size: 31px; line-height: 48px; font-weight: 600; }
            .act { width: 64px; height: 64px; color: #6b7280; }
            .doc { width: 56px; height: 56px; color: #9ca3af; }
            .spark { color: #6366f1; }
            .close { color: #9ca3af; }
            .state { padding: 24px 48px; display: grid; gap: 24px; border-bottom: 2px solid #f3f4f6; }
            .line { display: flex; align-items: center; gap: 12px; }
            .rule { width: 2px; height: 40px; margin: 0 12px; background: #e5e7eb; }
            .prio { gap: 8px; color: #9ca3af; }
            .prio .spark { margin-left: 8px; }
            .logged { display: flex; align-items: center; gap: 8px; margin-left: auto; color: #6b7280; }
            .story { width: 134px; }
            .normal { width: 162px; }
            .approvals { padding: 24px 48px; border-bottom: 2px solid #f3f4f6; }
            .approvals h2 { display: flex; align-items: center; gap: 16px; margin-bottom: 24px; font-size: 28px; line-height: 40px; font-weight: 600; }
            .approvals h2 ui-icon { color: #6366f1; }
            .request { display: grid; justify-items: start; gap: 16px; padding: 24px 24px 28px; border: 2px solid #e5e7eb; border-radius: 16px; color: #6b7280; }
            .request button { font-size: 24px; }
            .top { display: flex; justify-content: space-between; align-items: flex-start; width: 100%; height: 42px; font-size: 27px; line-height: 40px; color: #1f2937; }
            .muted { color: #9ca3af; }
            .pending { display: flex; align-items: center; gap: 8px; height: 42px; padding: 0 16px; border-radius: 21px; background: #fef3c7; color: #b45309; font-size: 22px; font-weight: 500; }
            .created { display: flex; align-items: center; gap: 16px; padding: 12px 48px; border-bottom: 2px solid #f3f4f6; color: #6b7280; }
            .tabs { display: flex; gap: 31px; height: 76px; padding: 0 48px; border-bottom: 2px solid #f3f4f6; font-size: 28px; line-height: 40px; }
        `;
    }
    markup() {
        return `
            <div class="dialog" role="dialog" aria-label="Invoice PDF download + email">
                <header>
                    <div class="heading">
                        <div class="crumbs"><span class="mono">ORBL-9</span><span class="arrow">→</span><a class="mono" href="#">ORBL-11</a><button aria-label="Copy link"><ui-icon name="copy" size="24"></ui-icon></button></div>
                        <h1>Invoice PDF download + email</h1>
                    </div>
                    <button class="doc" aria-label="Document"><ui-icon name="file"></ui-icon></button>
                    <button class="act" aria-label="Share"><ui-icon name="share" size="40"></ui-icon></button>
                    <button class="act spark" aria-label="Ask AI"><ui-icon name="sparkles" size="40" stroke="2"></ui-icon></button>
                    <button class="act close" aria-label="Close"><ui-icon name="x" size="40" stroke="1.5"></ui-icon></button>
                </header>
                <div class="state">
                    <div class="line">
                        <status-pill color="#94a3b8">Backlog</status-pill>
                        <status-pill color="#6366f1">Scheduled</status-pill>
                        <status-pill color="#f59e0b">In Progress</status-pill>
                        <status-pill color="#a855f7" active>Code Review</status-pill>
                        <status-pill color="#06b6d4">QA</status-pill>
                        <status-pill color="#10b981">Shipped</status-pill>
                        <status-pill color="#6b7280">Won't Fix</status-pill>
                        <span class="rule"></span>
                        <ui-select class="story" label="Type" options="story|bug|task"></ui-select>
                    </div>
                    <div class="line prio">
                        <ui-icon name="chevron-up" size="28"></ui-icon>
                        <ui-select class="normal" label="Priority" options="Normal|High"></ui-select>
                        <button class="spark" aria-label="Suggest priority"><ui-icon name="sparkles" size="28" stroke="2"></ui-icon></button>
                        <span class="logged"><ui-icon name="clock" size="28"></ui-icon>1d est · 1d 5h 30m logged</span>
                    </div>
                </div>
                <section class="approvals">
                    <h2><ui-icon name="shield-check"></ui-icon>Approvals</h2>
                    <div class="request">
                        <div class="top">
                            <span>Move to Shipped <span class="muted">· Release sign-off</span></span>
                            <span class="pending"><ui-icon name="clock" size="24"></ui-icon>Pending</span>
                        </div>
                        <p>0 of 1 approvals</p>
                        <button>Cancel request</button>
                    </div>
                </section>
                <div class="created">
                    <ui-avatar tone="amber">M</ui-avatar>
                    <span>Created by Marcus Reyes on 16. Aug. 2026</span>
                    <span class="muted">· updated 30. Aug. 2026</span>
                </div>
                <div class="tabs" role="tablist">
                    <tab-item active>Details</tab-item>
                    <tab-item>Comments</tab-item>
                    <tab-item>Time entries</tab-item>
                    <tab-item icon="clip">Attachments</tab-item>
                    <tab-item>Git</tab-item>
                    <tab-item icon="users">Schedule</tab-item>
                    <tab-item icon="activity">Activity</tab-item>
                    <tab-item icon="sparkles">Ask</tab-item>
                    <tab-item icon="trash" danger>Danger</tab-item>
                </div>
                <ticket-details></ticket-details>
            </div>
        `;
    }
}
customElements.define("ticket-modal", TicketModal);

class OrbotoApp extends BaseElement {
    styles() {
        return `
            :host { display: flex; height: 100vh; }
            main { display: flex; flex-direction: column; flex: 1; min-width: 0; }
        `;
    }
    markup() {
        return `
            <app-sidebar></app-sidebar>
            <main>
                <app-topbar></app-topbar>
                <project-header></project-header>
                <kanban-board></kanban-board>
            </main>
            <ticket-modal></ticket-modal>
        `;
    }
}
customElements.define("orboto-app", OrbotoApp);
</script>
</body>
</html>
